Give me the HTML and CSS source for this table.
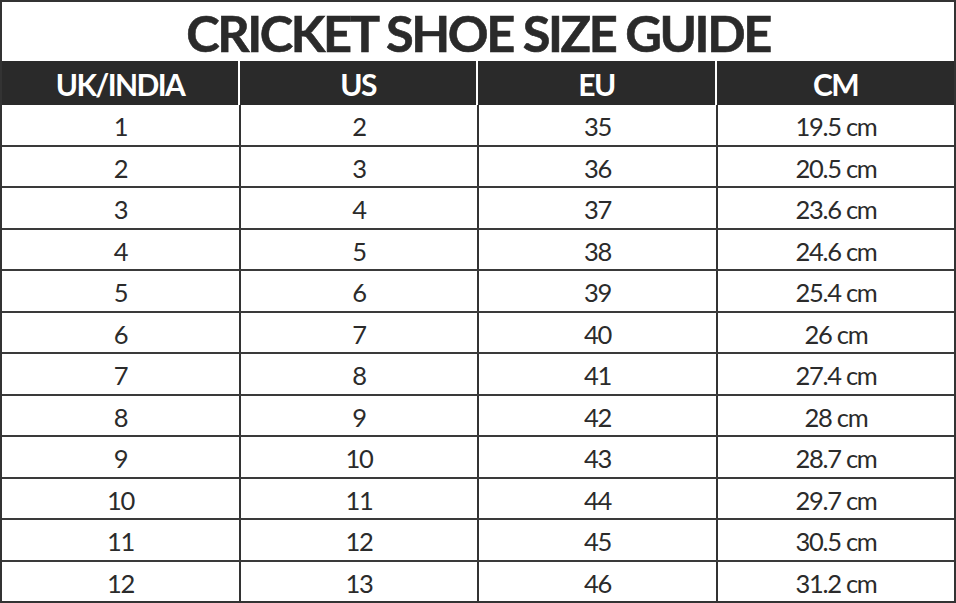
FILE: index.html
```html
<!DOCTYPE html>
<html>
<head>
<meta charset="utf-8">
<link rel="stylesheet" href="styles.css">
</head>
<body>
<div class="chart">
  <div class="title">CRICKET SHOE SIZE GUIDE</div>
  <div class="head">
    <div class="hcell">UK/INDIA</div>
    <div class="hcell">US</div>
    <div class="hcell">EU</div>
    <div class="hcell">CM</div>
  </div>
  <div class="body">
    <div class="row"><div class="cell">1</div><div class="cell">2</div><div class="cell">35</div><div class="cell">19.5 cm</div></div>
    <div class="row"><div class="cell">2</div><div class="cell">3</div><div class="cell">36</div><div class="cell">20.5 cm</div></div>
    <div class="row"><div class="cell">3</div><div class="cell">4</div><div class="cell">37</div><div class="cell">23.6 cm</div></div>
    <div class="row"><div class="cell">4</div><div class="cell">5</div><div class="cell">38</div><div class="cell">24.6 cm</div></div>
    <div class="row"><div class="cell">5</div><div class="cell">6</div><div class="cell">39</div><div class="cell">25.4 cm</div></div>
    <div class="row"><div class="cell">6</div><div class="cell">7</div><div class="cell">40</div><div class="cell">26 cm</div></div>
    <div class="row"><div class="cell">7</div><div class="cell">8</div><div class="cell">41</div><div class="cell">27.4 cm</div></div>
    <div class="row"><div class="cell">8</div><div class="cell">9</div><div class="cell">42</div><div class="cell">28 cm</div></div>
    <div class="row"><div class="cell">9</div><div class="cell">10</div><div class="cell">43</div><div class="cell">28.7 cm</div></div>
    <div class="row"><div class="cell">10</div><div class="cell">11</div><div class="cell">44</div><div class="cell">29.7 cm</div></div>
    <div class="row"><div class="cell">11</div><div class="cell">12</div><div class="cell">45</div><div class="cell">30.5 cm</div></div>
    <div class="row"><div class="cell">12</div><div class="cell">13</div><div class="cell">46</div><div class="cell">31.2 cm</div></div>
  </div>
</div>
</body>
</html>
```
FILE: styles.css
```css
html, body {
  margin: 0;
  padding: 0;
  background: #fff;
}
.chart {
  width: 956px;
  height: 603px;
  box-sizing: border-box;
  border: 2px solid #333;
  display: flex;
  flex-direction: column;
  font-family: Lato, "Open Sans", sans-serif;
  color: #2b2b2b;
}
.title {
  height: 59px;
  display: flex;
  align-items: center;
  justify-content: center;
  font-size: 50.5px;
  font-weight: 700;
  letter-spacing: -2.4px;
  color: #2a2a2a;
  padding-top: 2px;
  box-sizing: border-box;
  -webkit-text-stroke: 0.6px #2a2a2a;
}
.head {
  height: 44px;
  display: grid;
  grid-template-columns: 236px 236px 237px 1fr;
  column-gap: 2px;
  background: #fff;
}
.hcell {
  background: #2a2a2a;
  color: #fff;
  display: flex;
  align-items: center;
  justify-content: center;
  font-size: 30px;
  font-weight: 700;
  letter-spacing: -1.6px;
  padding-top: 2px;
}
.body {
  flex: 1;
  display: flex;
  flex-direction: column;
}
.row {
  flex: 1;
  display: grid;
  grid-template-columns: 237px 238px 239px 1fr;
  border-top: 2px solid #3a3a3a;
}
.row:first-child {
  border-top: none;
}
.cell {
  display: flex;
  align-items: center;
  justify-content: center;
  font-size: 25.5px;
  font-weight: 400;
  letter-spacing: -1.3px;
  color: #2b2b2b;
  padding-top: 3px;
}
.cell + .cell {
  border-left: 2px solid #333;
}
```
